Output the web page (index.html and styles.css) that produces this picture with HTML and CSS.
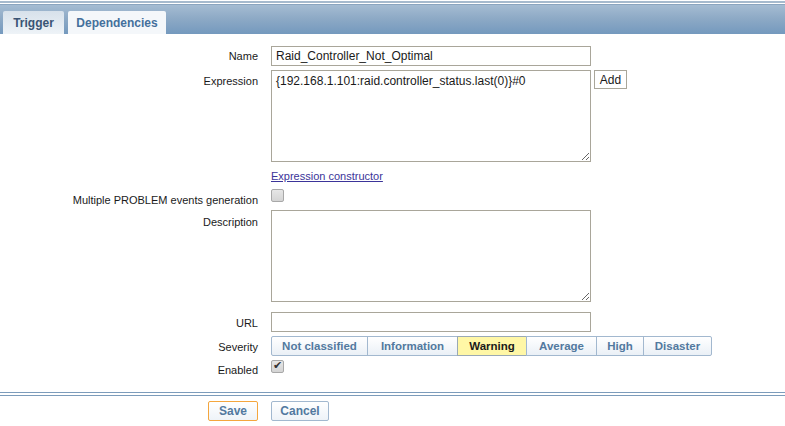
FILE: index.html
```html
<!DOCTYPE html>
<html>
<head>
<meta charset="utf-8">
<link rel="stylesheet" href="styles.css">
</head>
<body>
<div class="topline"></div>
<div class="tabbar">
  <span class="tab active">Trigger</span>
  <span class="tab">Dependencies</span>
</div>
<div class="form">
  <div class="label l1">Name</div>
  <div class="field"><input class="text" type="text" value="Raid_Controller_Not_Optimal"></div>

  <div class="label l2">Expression</div>
  <div class="field">
    <textarea class="area">{192.168.1.101:raid.controller_status.last(0)}#0</textarea>
    <button class="add">Add</button>
  </div>

  <div class="label"></div>
  <div class="field f3"><a href="#" class="link">Expression constructor</a></div>

  <div class="label l4">Multiple PROBLEM events generation</div>
  <div class="field f4"><input type="checkbox" class="cb"></div>

  <div class="label l5">Description</div>
  <div class="field"><textarea class="area"></textarea></div>

  <div class="label l6">URL</div>
  <div class="field"><input class="text" type="text" value=""></div>

  <div class="label l7">Severity</div>
  <div class="field">
    <div class="sev">
      <span class="sb">Not classified</span><span class="sb">Information</span><span class="sb warn">Warning</span><span class="sb">Average</span><span class="sb">High</span><span class="sb">Disaster</span>
    </div>
  </div>

  <div class="label l8">Enabled</div>
  <div class="field"><input type="checkbox" class="cb" checked></div>
</div>
<div class="footlines"></div>
<div class="buttons">
  <div class="bleft"><button class="btn save">Save</button></div>
  <div class="bright"><button class="btn cancel">Cancel</button></div>
</div>
</body>
</html>
```
FILE: styles.css
```css
html, body {
  margin: 0;
  padding: 0;
  background: #ffffff;
}
body {
  font-family: "Liberation Sans", Arial, sans-serif;
  font-size: 11px;
  color: #1a1a1a;
}
.topline {
  margin-top: 1px;
  height: 2px;
  background: #a6bacd;
  border-bottom: 1px solid #ffffff;
}
.tabbar {
  height: 30px;
  box-sizing: border-box;
  border-top: 1px solid #8ba5bf;
  background: linear-gradient(#a5bcd2 0%, #8eaac6 45%, #7499be 100%);
  display: flex;
  align-items: flex-end;
  gap: 4px;
  padding-left: 3px;
}
.tab {
  height: 23px;
  box-sizing: border-box;
  padding-top: 5px;
  text-align: center;
  font-weight: bold;
  font-size: 12px;
  color: #44709c;
  background: #f4f7fa;
  border-radius: 2px 2px 0 0;
  width: 98px;
}
.tab.active {
  width: 61px;
  color: #3a5474;
  background: linear-gradient(#d7e1eb, #eef3f7);
}
.form {
  display: grid;
  grid-template-columns: 258px 1fr;
  grid-template-rows: 24px 98px 20px 22px 102px 24px 24px 32px;
  column-gap: 13px;
  margin-top: 12px;
}
.label {
  text-align: right;
  line-height: 14px;
}
.l1 { padding-top: 3px; }
.l2 { padding-top: 4px; }
.l4 { padding-top: 5px; }
.l5 { padding-top: 5px; }
.l6 { padding-top: 4px; }
.l7 { padding-top: 4px; }
.l8 { padding-top: 3px; }
.field {
  display: flex;
  align-items: flex-start;
}
.text {
  width: 320px;
  height: 20px;
  box-sizing: border-box;
  border: 1px solid #a9a69a;
  padding: 0 4px;
  font-family: "Liberation Sans", Arial, sans-serif;
  font-size: 12px;
  color: #1a1a1a;
  margin: 0;
  outline: none;
}
.area {
  width: 320px;
  height: 92px;
  box-sizing: border-box;
  border: 1px solid #a9a69a;
  padding: 3px 4px;
  margin: 0;
  font-family: "Liberation Sans", Arial, sans-serif;
  font-size: 12px;
  color: #1a1a1a;
  resize: both;
  outline: none;
}
.add {
  margin-left: 3px;
  height: 19px;
  width: 33px;
  box-sizing: border-box;
  border: 1px solid #a9a69a;
  background: #ffffff;
  font-family: "Liberation Sans", Arial, sans-serif;
  font-size: 12px;
  color: #1a1a1a;
  padding: 0;
}
.f3 { padding-top: 1px; }
.link {
  color: #3b3499;
  text-decoration: underline;
  line-height: 14px;
}
.f4 { padding-top: 1px; }
.cb {
  -webkit-appearance: none;
  appearance: none;
  width: 13px;
  height: 13px;
  margin: 0;
  border: 1px solid #a8a8a8;
  border-radius: 2px;
  background: linear-gradient(#e6e6e6, #d4d4d4);
  box-sizing: border-box;
  position: relative;
}
.cb:checked::after {
  content: "✔";
  position: absolute;
  left: 1px;
  top: -2px;
  font-size: 11px;
  color: #333;
  font-family: "DejaVu Sans", sans-serif;
}
.sev {
  display: flex;
}
.sb {
  height: 20px;
  box-sizing: border-box;
  border: 1px solid #a2b8cf;
  margin-left: -1px;
  text-align: center;
  line-height: 18px;
  font-weight: bold;
  font-size: 11.5px;
  color: #52799f;
  background: linear-gradient(#ffffff, #eaf0f6);
}
.sb:nth-child(1) { margin-left: 0; width: 97px; border-radius: 2px 0 0 2px; }
.sb:nth-child(2) { width: 91px; }
.sb:nth-child(3) { width: 70px; }
.sb:nth-child(4) { width: 71px; }
.sb:nth-child(5) { width: 48px; }
.sb:nth-child(6) { width: 69px; border-radius: 0 2px 2px 0; }
.sb.warn {
  background: #fff7a6;
  color: #1a1a1a;
  border-color: #9aa9b5;
}
.footlines {
  border-top: 1px solid #7c9cbb;
  border-bottom: 1px solid #7c9cbb;
  height: 2px;
}
.buttons {
  display: grid;
  grid-template-columns: 258px 1fr;
  column-gap: 13px;
  padding-top: 5px;
}
.bleft { text-align: right; }
.btn {
  height: 20px;
  box-sizing: border-box;
  border: 1px solid #a2b8cf;
  border-radius: 2px;
  background: linear-gradient(#ffffff, #eef3f8);
  font-family: "Liberation Sans", Arial, sans-serif;
  font-weight: bold;
  font-size: 12px;
  color: #52799f;
  padding: 0;
  margin: 0;
}
.save {
  width: 50px;
  border-color: #f4a63e;
}
.cancel { width: 58px; }
```
